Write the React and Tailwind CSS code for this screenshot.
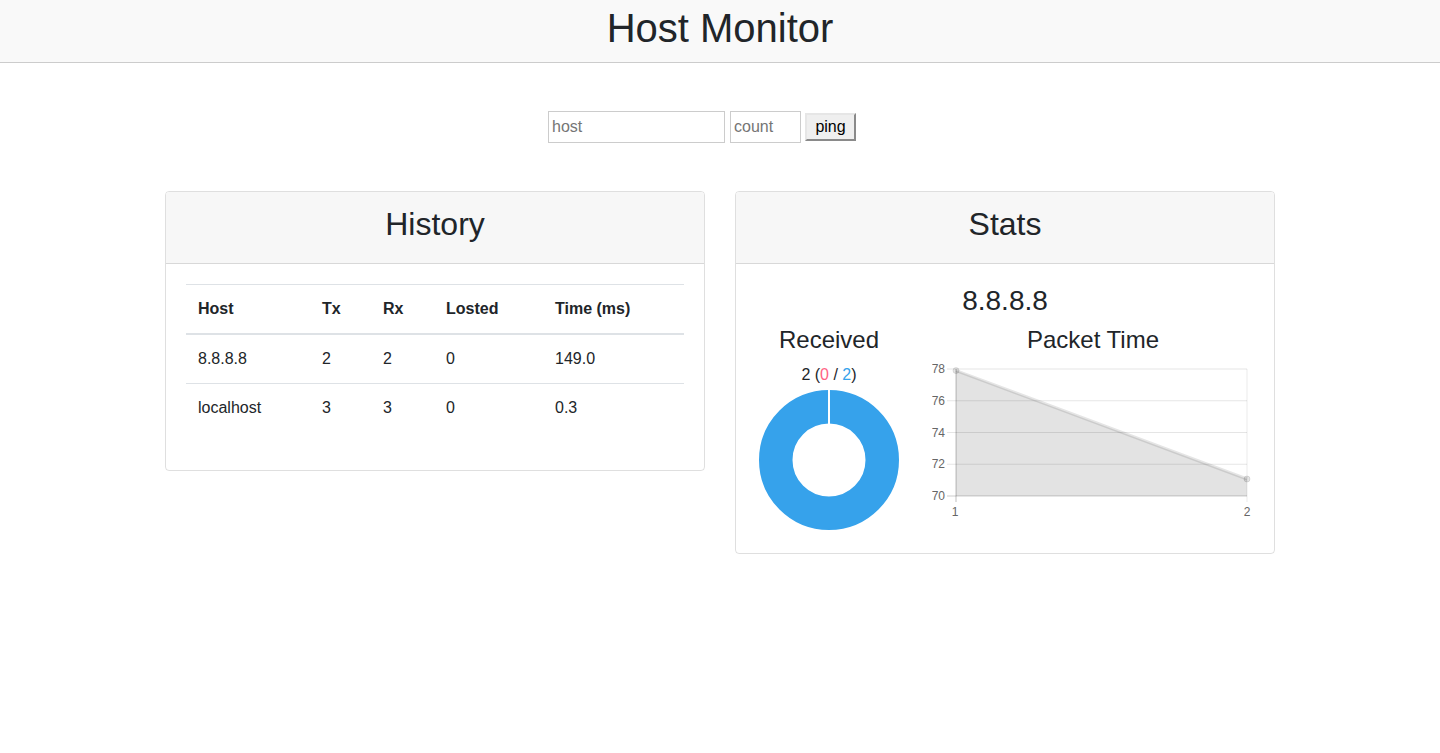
import React from "react";

function Donut() {
  return (
    <svg width="146" height="146" viewBox="0 0 146 146" className="block mx-auto">
      <circle cx="73" cy="73" r="53.25" fill="none" stroke="#36a2eb" strokeWidth="33.5" />
      <line x1="73" y1="2" x2="73" y2="38" stroke="#ffffff" strokeWidth="2" />
    </svg>
  );
}

function LineChart() {
  // canvas 322 x 170, plot x 24..315, y 6..133 (70..78)
  const x0 = 24, x1 = 315, yTop = 6, yBot = 133;
  const yv = (v) => yBot - ((v - 70) / 8) * (yBot - yTop);
  const p1 = { x: x0, y: yv(77.9) };
  const p2 = { x: x1, y: yv(71.07) };
  const ticks = [78, 76, 74, 72, 70];
  return (
    <svg width="322" height="170" viewBox="0 0 322 170" className="block">
      {ticks.map((t) => (
        <line key={t} x1={x0 - 9} x2={x1} y1={yv(t)} y2={yv(t)} stroke={t === 70 ? "rgba(0,0,0,0.2)" : "rgba(0,0,0,0.1)"} strokeWidth="1" />
      ))}
      <line x1={x1} x2={x1} y1={yTop} y2={yBot + 6} stroke="rgba(0,0,0,0.08)" strokeWidth="1" />
      <polygon points={`${p1.x},${p1.y} ${p2.x},${p2.y} ${x1},${yBot} ${x0},${yBot}`} fill="rgba(0,0,0,0.11)" />
      <line x1={x0} x2={x0} y1={yTop} y2={yBot + 6} stroke="rgba(0,0,0,0.25)" strokeWidth="1" />
      <line x1={p1.x} y1={p1.y} x2={p2.x} y2={p2.y} stroke="rgba(0,0,0,0.1)" strokeWidth="3" />
      <circle cx={p1.x} cy={p1.y} r="3" fill="rgba(0,0,0,0.1)" stroke="rgba(0,0,0,0.1)" />
      <circle cx={p2.x} cy={p2.y} r="3" fill="rgba(0,0,0,0.1)" stroke="rgba(0,0,0,0.1)" />
      {ticks.map((t) => (
        <text key={t} x={13} y={yv(t) + 4} textAnchor="end" fontSize="12" fill="#666666" fontFamily="'Liberation Sans', Arial, sans-serif">
          {t}
        </text>
      ))}
      <text x={x0 - 1} y={153} textAnchor="middle" fontSize="12" fill="#666666" fontFamily="'Liberation Sans', Arial, sans-serif">1</text>
      <text x={x1} y={153} textAnchor="middle" fontSize="12" fill="#666666" fontFamily="'Liberation Sans', Arial, sans-serif">2</text>
    </svg>
  );
}

export default function App() {
  const rows = [
    ["8.8.8.8", "2", "2", "0", "149.0"],
    ["localhost", "3", "3", "0", "0.3"],
  ];
  return (
    <div className="min-h-[753px] bg-white text-[#212529] text-base" style={{ fontFamily: "'Liberation Sans', Arial, sans-serif" }}>
      <header className="h-[62px] box-content bg-[#f9f9f9] border-b border-[#cccccc] text-center">
        <h1 className="pt-[4px] text-[40px] leading-[48px] font-normal">Host Monitor</h1>
      </header>

      <div className="flex justify-center items-center mt-[48px] h-[32px] pr-[36px]">
        <input
          placeholder="host"
          className="w-[177px] h-[32px] border border-[#cccccc] px-[3px] text-base text-black placeholder:text-[#757575] outline-none"
        />
        <input
          placeholder="count"
          className="ml-[5px] w-[71px] h-[32px] border border-[#cccccc] px-[3px] text-base text-black placeholder:text-[#757575] outline-none"
        />
        <button className="ml-[4px] w-[51px] h-[28px] bg-[#efefef] border-2 border-t-[#e6e6e6] border-l-[#e6e6e6] border-r-[#8a8a8a] border-b-[#8a8a8a] text-base text-black leading-none">
          ping
        </button>
      </div>

      <div className="w-[1110px] mx-auto mt-[48px] flex gap-[30px] items-start">
        {/* History */}
        <div className="w-[540px] border border-[rgba(0,0,0,0.125)] rounded-[4px] overflow-hidden">
          <div className="bg-[#f7f7f7] border-b border-[rgba(0,0,0,0.125)] px-5 pt-[13px] pb-5 text-center">
            <h2 className="text-[32px] leading-[38.4px] font-normal">History</h2>
          </div>
          <div className="p-5">
            <table className="w-full border-collapse mb-[18px]">
              <thead>
                <tr className="border-t border-[#dee2e6] border-b-2">
                  {["Host", "Tx", "Rx", "Losted", "Time (ms)"].map((h, i) => (
                    <th
                      key={h}
                      className={
                        "text-left font-bold p-3 leading-6 " +
                        ["w-[124px]", "w-[61px]", "w-[63px]", "w-[109px]", ""][i]
                      }
                    >
                      {h}
                    </th>
                  ))}
                </tr>
              </thead>
              <tbody>
                {rows.map((r, ri) => (
                  <tr key={ri} className={ri === 0 ? "" : "border-t border-[#dee2e6]"}>
                    {r.map((c, ci) => (
                      <td key={ci} className="p-3 leading-6">
                        {c}
                      </td>
                    ))}
                  </tr>
                ))}
              </tbody>
            </table>
          </div>
        </div>

        {/* Stats */}
        <div className="w-[540px] border border-[rgba(0,0,0,0.125)] rounded-[4px] overflow-hidden">
          <div className="bg-[#f7f7f7] border-b border-[rgba(0,0,0,0.125)] px-5 pt-[13px] pb-5 text-center">
            <h2 className="text-[32px] leading-[38.4px] font-normal">Stats</h2>
          </div>
          <div className="p-5 text-center">
            <h3 className="text-[28px] leading-[33.6px] mb-2 font-normal">8.8.8.8</h3>
            <div className="flex">
              <div className="w-[146px]">
                <h4 className="text-[24px] leading-[28.8px] mb-2 font-normal">Received</h4>
                <div className="leading-6">
                  2 (<span className="text-[#ff6384]">0</span> / <span className="text-[#36a2eb]">2</span>)
                </div>
                <Donut />
              </div>
              <div className="ml-[30px] w-[322px]">
                <h4 className="text-[24px] leading-[28.8px] mb-2 font-normal">Packet Time</h4>
                <LineChart />
              </div>
            </div>
          </div>
        </div>
      </div>
    </div>
  );
}
